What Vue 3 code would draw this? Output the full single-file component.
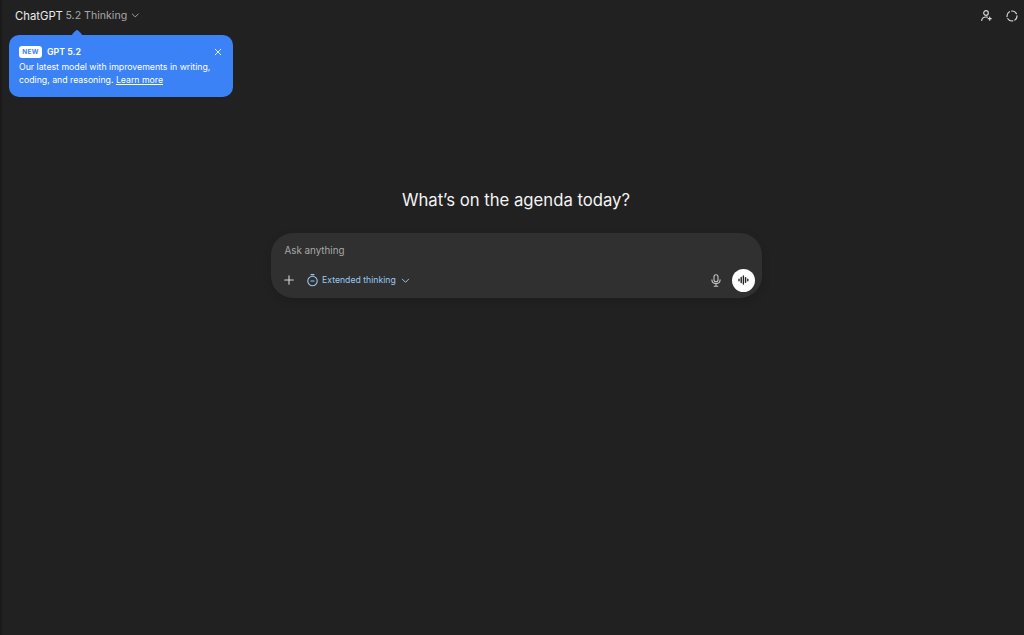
<template>
  <div class="page">
    <div class="rail"></div>
    <main class="main">
      <header class="topbar">
        <button class="model-switch">
          <span class="brand">ChatGPT</span>
          <span class="model">5.2 Thinking</span>
          <svg class="caret" width="8.5" height="8.5" viewBox="0 0 10 10" fill="none" stroke="currentColor" stroke-width="1.1" stroke-linecap="round" stroke-linejoin="round">
            <path d="M1.5 3.5 5 7l3.5-3.5" />
          </svg>
        </button>
        <div class="top-actions">
          <svg class="top-icon" width="14" height="14" viewBox="0 0 14 14" fill="none" stroke="currentColor" stroke-width="1.2" stroke-linecap="round">
            <circle cx="6" cy="4" r="2.3" />
            <path d="M1.7 11.4c.3-2.2 2-3.4 4.3-3.4.5 0 1 .1 1.4.2" />
            <path d="M9.7 8.2v3M8.2 9.7h3" />
          </svg>
          <svg class="top-icon" width="14" height="14" viewBox="0 0 14 14" fill="none" stroke="currentColor" stroke-width="1.2" stroke-linecap="round">
            <circle cx="7" cy="7" r="5" stroke-dasharray="5.6 2.25" stroke-dashoffset="1" />
          </svg>
        </div>
      </header>

      <aside class="callout">
        <span class="callout-arrow"></span>
        <div class="callout-head">
          <span class="badge">NEW</span>
          <span class="callout-title">GPT 5.2</span>
          <svg class="callout-close" width="8" height="8" viewBox="0 0 8 8" fill="none" stroke="currentColor" stroke-width="1" stroke-linecap="round">
            <path d="M1.2 1.2l5.6 5.6M6.8 1.2 1.2 6.8" />
          </svg>
        </div>
        <p class="callout-text">Our latest model with improvements in writing, coding, and reasoning. <a class="callout-link">Learn more</a></p>
      </aside>

      <section class="center">
        <h1 class="heading">What’s on the agenda today?</h1>
        <div class="composer">
          <div class="placeholder">Ask anything</div>
          <div class="composer-row">
            <svg class="plus" width="10" height="10" viewBox="0 0 10 10" fill="none" stroke="currentColor" stroke-width="1.1" stroke-linecap="round">
              <path d="M5 .7v8.6M.7 5h8.6" />
            </svg>
            <div class="thinking">
              <svg width="13" height="14" viewBox="0 0 13 14" fill="none" stroke="currentColor" stroke-width="1.1" stroke-linecap="round">
                <circle cx="6.5" cy="8" r="4.7" />
                <path d="M5 1.6h3M5 8h3" />
              </svg>
              <span>Extended thinking</span>
              <svg class="thinking-caret" width="9" height="9" viewBox="0 0 10 10" fill="none" stroke="currentColor" stroke-width="1.1" stroke-linecap="round" stroke-linejoin="round">
                <path d="M1.5 3.5 5 7l3.5-3.5" />
              </svg>
            </div>
            <svg class="mic" width="10" height="13" viewBox="0 0 10 13" fill="none" stroke="currentColor" stroke-width="1.1" stroke-linecap="round">
              <rect x="3" y=".8" width="4" height="7" rx="2" />
              <path d="M.9 5.8c0 2.4 1.7 3.8 4.1 3.8s4.1-1.4 4.1-3.8M5 9.6v2.6M3.2 12.2h3.6" />
            </svg>
            <button class="voice">
              <svg width="11" height="10" viewBox="0 0 11 10" fill="none" stroke="#222" stroke-width="1.4" stroke-linecap="round">
                <path d="M1 4.2v1.6M3.2 2.4v5.2M5.4 .9v8.2M7.6 2.7v4.6M9.8 4.2v1.6" />
              </svg>
            </button>
          </div>
        </div>
      </section>
    </main>
  </div>
</template>

<script setup>
</script>

<style>
html,
body {
  margin: 0;
  background: #212121;
}
</style>

<style scoped>
.page {
  display: flex;
  height: 635px;
  overflow: hidden;
  background: #212121;
  font-family: Inter, "Liberation Sans", sans-serif;
  color: #ececec;
}

.rail {
  width: 2px;
  flex-shrink: 0;
  background: #1a1a1a;
}

.main {
  position: relative;
  flex: 1;
  display: flex;
  flex-direction: column;
}

.topbar {
  display: flex;
  align-items: center;
  justify-content: space-between;
  height: 31px;
  padding: 0 5px 0 13px;
}

.model-switch {
  display: flex;
  align-items: center;
  gap: 2.5px;
  padding: 0;
  border: none;
  background: none;
  font: inherit;
  font-size: 11.3px;
  line-height: 16px;
  color: #ececec;
}

.model {
  font-size: 10.6px;
  color: #a8a8a8;
}

.caret {
  margin-left: 1.5px;
  color: #a8a8a8;
}

.top-actions {
  display: flex;
  gap: 11px;
  color: #d6d6d6;
}

.callout {
  position: absolute;
  left: 6.5px;
  top: 34.5px;
  box-sizing: border-box;
  width: 224.5px;
  height: 62.5px;
  padding: 10.5px 10.5px 0;
  border-radius: 10px;
  background: #3b82f6;
  color: #fff;
}

.callout-arrow {
  position: absolute;
  top: -3.5px;
  left: 64px;
  width: 8px;
  height: 8px;
  border-radius: 2px;
  background: #3b82f6;
  transform: rotate(45deg);
}

.callout-head {
  display: flex;
  align-items: center;
  gap: 5px;
  height: 13px;
}

.badge {
  display: flex;
  align-items: center;
  justify-content: center;
  width: 23px;
  height: 12px;
  border-radius: 3px;
  background: #fff;
  color: #3b82f6;
  font-size: 6.5px;
  font-weight: 700;
  letter-spacing: 0.3px;
}

.callout-title {
  font-size: 8.8px;
  font-weight: 600;
}

.callout-close {
  margin-left: auto;
  margin-right: 1px;
  opacity: 0.85;
}

.callout-text {
  margin: 3px 0 0;
  font-size: 8.74px;
  line-height: 13px;
}

.callout-link {
  text-decoration: underline;
}

.center {
  display: flex;
  flex-direction: column;
  align-items: center;
  padding-top: 157px;
  padding-left: 6px;
}

.heading {
  margin: 0;
  font-size: 16.7px;
  line-height: 24px;
  font-weight: 400;
  color: #f4f4f4;
}

.composer {
  box-sizing: border-box;
  width: 491px;
  height: 65px;
  margin-top: 21px;
  padding: 11px 7px 0 14px;
  border-radius: 22px;
  background: #303030;
  box-shadow: 0 3px 10px rgba(0, 0, 0, 0.12);
}

.placeholder {
  font-size: 9.8px;
  line-height: 14px;
  color: #a8a8a8;
}

.composer-row {
  display: flex;
  align-items: center;
  margin-top: 10px;
  height: 24px;
}

.plus {
  margin-left: -1px;
  color: #d6d6d6;
}

.thinking {
  display: flex;
  align-items: center;
  gap: 3.5px;
  margin-left: 12px;
  font-size: 8.7px;
  color: #99c8f0;
}

.thinking-caret {
  margin-left: 1.5px;
}

.mic {
  margin-left: auto;
  color: #c4c4c4;
}

.voice {
  display: flex;
  align-items: center;
  justify-content: center;
  width: 23px;
  height: 23px;
  margin-left: 11px;
  padding: 0;
  border: none;
  border-radius: 50%;
  background: #fff;
}
</style>
